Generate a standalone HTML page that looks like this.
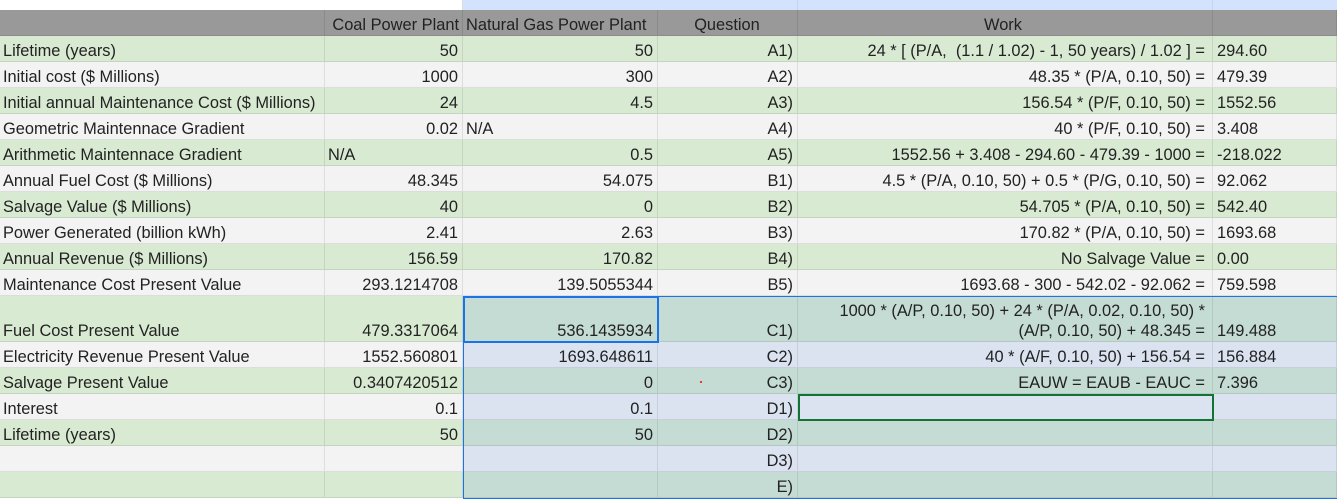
<!DOCTYPE html>
<html><head><meta charset="utf-8"><style>
*{box-sizing:border-box;margin:0;padding:0}
body{width:1337px;height:502px;overflow:hidden;background:#fff;font-family:"Liberation Sans",Arial,sans-serif;font-size:16.4px;color:#222;position:relative}
.r{display:flex;height:26px}
.c{height:100%;border-right:1px solid rgba(0,0,0,0.09);border-bottom:1px solid rgba(0,0,0,0.09);padding:0 4px 0 3px;display:flex;align-items:flex-end;white-space:nowrap;overflow:visible}
.a{width:325px}.b{width:138px;justify-content:flex-end}.cc{width:195px;justify-content:flex-end}.d{width:140px;justify-content:flex-end}.e{width:415px;justify-content:flex-end;padding-right:7px}.f{width:124px;padding-left:4px}
.g{background:#d9ead3}.w{background:#f3f3f3}
.g .sel{background:#c5dcd4}.w .sel{background:#dbe3f1}
.hd .c{background:#999;justify-content:center;color:#222}
.top{height:10px;display:flex}
</style></head><body>
<div class="top"><div style="width:463px;background:#fff;border-right:1px solid #ddd"></div><div style="width:335px;background:#d3e3fd;border-right:1px solid #c7d3e6"></div><div style="width:415px;background:#d3e3fd;border-right:1px solid #c7d3e6"></div><div style="flex:1;background:#d3e3fd"></div></div>
<div class="r hd"><div class="c a"></div><div class="c b" style="justify-content:flex-end;padding-right:3px">Coal Power Plant</div><div class="c cc" style="justify-content:flex-start">Natural Gas Power Plant</div><div class="c d">Question</div><div class="c e">Work</div><div class="c f"></div></div>
<div class="r g"><div class="c a">Lifetime (years)</div><div class="c b">50</div><div class="c cc">50</div><div class="c d">A1)</div><div class="c e">24 * [ (P/A,&nbsp; (1.1 / 1.02) - 1, 50 years) / 1.02 ] =</div><div class="c f">294.60</div></div>
<div class="r w"><div class="c a">Initial cost ($ Millions)</div><div class="c b">1000</div><div class="c cc">300</div><div class="c d">A2)</div><div class="c e">48.35 * (P/A, 0.10, 50) =</div><div class="c f">479.39</div></div>
<div class="r g"><div class="c a">Initial annual Maintenance Cost ($ Millions)</div><div class="c b">24</div><div class="c cc">4.5</div><div class="c d">A3)</div><div class="c e">156.54 * (P/F, 0.10, 50) =</div><div class="c f">1552.56</div></div>
<div class="r w"><div class="c a">Geometric Maintennace Gradient</div><div class="c b">0.02</div><div class="c cc" style="justify-content:flex-start">N/A</div><div class="c d">A4)</div><div class="c e">40 * (P/F, 0.10, 50) =</div><div class="c f">3.408</div></div>
<div class="r g"><div class="c a">Arithmetic Maintennace Gradient</div><div class="c b" style="justify-content:flex-start">N/A</div><div class="c cc">0.5</div><div class="c d">A5)</div><div class="c e">1552.56 + 3.408 - 294.60 - 479.39 - 1000 =</div><div class="c f">-218.022</div></div>
<div class="r w"><div class="c a">Annual Fuel Cost ($ Millions)</div><div class="c b">48.345</div><div class="c cc">54.075</div><div class="c d">B1)</div><div class="c e">4.5 * (P/A, 0.10, 50) + 0.5 * (P/G, 0.10, 50) =</div><div class="c f">92.062</div></div>
<div class="r g"><div class="c a">Salvage Value ($ Millions)</div><div class="c b">40</div><div class="c cc">0</div><div class="c d">B2)</div><div class="c e">54.705 * (P/A, 0.10, 50) =</div><div class="c f">542.40</div></div>
<div class="r w"><div class="c a">Power Generated (billion kWh)</div><div class="c b">2.41</div><div class="c cc">2.63</div><div class="c d">B3)</div><div class="c e">170.82 * (P/A, 0.10, 50) =</div><div class="c f">1693.68</div></div>
<div class="r g"><div class="c a">Annual Revenue ($ Millions)</div><div class="c b">156.59</div><div class="c cc">170.82</div><div class="c d">B4)</div><div class="c e">No Salvage Value =</div><div class="c f">0.00</div></div>
<div class="r w"><div class="c a">Maintenance Cost Present Value</div><div class="c b">293.1214708</div><div class="c cc">139.5055344</div><div class="c d">B5)</div><div class="c e">1693.68 - 300 - 542.02 - 92.062 =</div><div class="c f">759.598</div></div>
<div class="r g" style="height:46px"><div class="c a">Fuel Cost Present Value</div><div class="c b">479.3317064</div><div class="c cc sel">536.1435934</div><div class="c d sel">C1)</div><div class="c e sel" style="text-align:right;line-height:20px;white-space:normal;padding-bottom:0">1000 * (A/P, 0.10, 50) + 24 * (P/A, 0.02, 0.10, 50) *<br>(A/P, 0.10, 50) + 48.345 =</div><div class="c f sel" style="flex:1">149.488</div></div>
<div class="r w"><div class="c a">Electricity Revenue Present Value</div><div class="c b">1552.560801</div><div class="c cc sel">1693.648611</div><div class="c d sel">C2)</div><div class="c e sel">40 * (A/F, 0.10, 50) + 156.54 =</div><div class="c f sel" style="flex:1">156.884</div></div>
<div class="r g"><div class="c a">Salvage Present Value</div><div class="c b">0.3407420512</div><div class="c cc sel">0</div><div class="c d sel">C3)</div><div class="c e sel">EAUW = EAUB - EAUC =</div><div class="c f sel" style="flex:1">7.396</div></div>
<div class="r w"><div class="c a">Interest</div><div class="c b">0.1</div><div class="c cc sel">0.1</div><div class="c d sel">D1)</div><div class="c e sel"></div><div class="c f sel" style="flex:1"></div></div>
<div class="r g"><div class="c a">Lifetime (years)</div><div class="c b">50</div><div class="c cc sel">50</div><div class="c d sel">D2)</div><div class="c e sel"></div><div class="c f sel" style="flex:1"></div></div>
<div class="r w"><div class="c a"></div><div class="c b"></div><div class="c cc sel"></div><div class="c d sel">D3)</div><div class="c e sel"></div><div class="c f sel" style="flex:1"></div></div>
<div class="r g"><div class="c a"></div><div class="c b"></div><div class="c cc sel"></div><div class="c d sel">E)</div><div class="c e sel"></div><div class="c f sel" style="flex:1"></div></div>
<div style="position:absolute;left:463px;top:296px;width:880px;height:203px;border:1px solid #1a73e8"></div>
<div style="position:absolute;left:463px;top:296px;width:196px;height:47px;border:2px solid #1a73e8"></div>
<div style="position:absolute;left:798px;top:394px;width:416px;height:27px;border:2px solid #137333"></div>
<div style="position:absolute;left:700px;top:381px;width:2px;height:2px;background:#e33"></div>
</body></html>
